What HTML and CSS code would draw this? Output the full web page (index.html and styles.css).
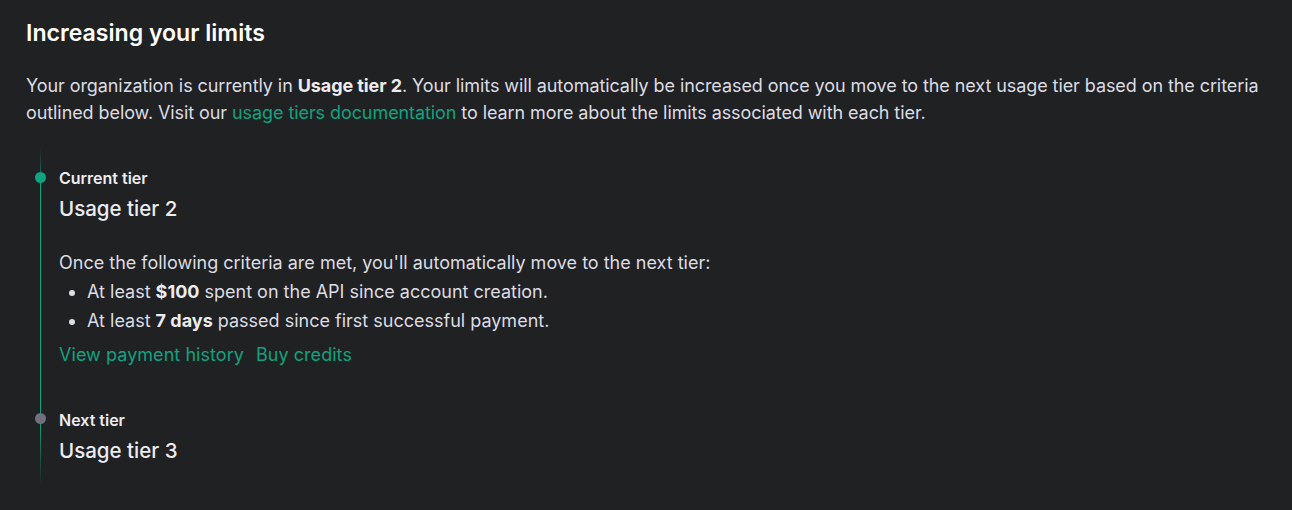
FILE: index.html
```html
<!DOCTYPE html>
<html lang="en">
<head>
<meta charset="utf-8">
<title>Increasing your limits</title>
<link rel="stylesheet" href="styles.css">
</head>
<body>
<section class="page">
  <h2 class="heading">Increasing your limits</h2>
  <p class="intro">Your organization is currently in <strong>Usage tier 2</strong>. Your limits will automatically be increased once you move to the next usage tier based on the criteria outlined below. Visit our <a class="link" href="#">usage tiers documentation</a> to learn more about the limits associated with each tier.</p>

  <div class="timeline">
    <div class="tier">
      <div class="marker">
        <span class="seg seg-top-fade"></span>
        <span class="dot dot-green"></span>
        <span class="seg seg-fill"></span>
      </div>
      <div class="tier-body tier-body-first">
        <div class="tier-label">Current tier</div>
        <div class="tier-title">Usage tier 2</div>
        <p class="criteria">Once the following criteria are met, you'll automatically move to the next tier:</p>
        <ul class="criteria-list">
          <li>At least <strong>$100</strong> spent on the API since account creation.</li>
          <li>At least <strong>7 days</strong> passed since first successful payment.</li>
        </ul>
        <div class="actions">
          <a class="link" href="#">View payment history</a>
          <a class="link" href="#">Buy credits</a>
        </div>
      </div>
    </div>
    <div class="tier">
      <div class="marker">
        <span class="seg seg-top"></span>
        <span class="dot dot-gray"></span>
        <span class="seg seg-bottom-fade"></span>
      </div>
      <div class="tier-body tier-body-last">
        <div class="tier-label">Next tier</div>
        <div class="tier-title">Usage tier 3</div>
      </div>
    </div>
  </div>
</section>
</body>
</html>
```

FILE: styles.css
```css
* { box-sizing: border-box; }
html, body {
  margin: 0;
  padding: 0;
  background: #202123;
}
body {
  font-family: Inter, "Noto Sans", "Liberation Sans", sans-serif;
  color: #ececf1;
  -webkit-font-smoothing: antialiased;
}
.page {
  padding: 19px 26px 0 26px;
}
.heading {
  margin: 0;
  font-size: 23.1px;
  line-height: 28px;
  font-weight: 600;
  color: #ffffff;
}
.intro {
  margin: 25px 0 0 0;
  font-size: 18px;
  line-height: 27px;
  letter-spacing: -0.08px;
  color: #dcdce4;
}
.intro strong, .criteria-list strong {
  font-weight: 700;
  color: #ececf1;
}
.link {
  color: #10a37f;
  text-decoration: none;
}
.timeline {
  margin-top: 21px;
  display: flex;
  flex-direction: column;
}
.tier {
  display: grid;
  grid-template-columns: 33px 1fr;
}
.marker {
  display: flex;
  flex-direction: column;
  align-items: center;
  width: 29px;
}
.seg {
  width: 1.5px;
  background: #10a37f;
}
.seg-top-fade {
  height: 25px;
  background: linear-gradient(to bottom, rgba(16,163,127,0), rgba(16,163,127,0.5));
}
.seg-top { height: 23px; }
.seg-fill { flex: 1; }
.seg-bottom-fade {
  flex: 1;
  background: linear-gradient(to bottom, #10a37f, rgba(16,163,127,0));
}
.dot {
  width: 11px;
  height: 11px;
  border-radius: 50%;
  flex: none;
}
.dot-green { background: #10a37f; }
.dot-gray { background: #707080; }
.tier-body-first {
  padding-top: 21px;
  padding-bottom: 21px;
}
.tier-body-last {
  padding-top: 20px;
  padding-bottom: 20px;
}
.tier-label {
  font-size: 16px;
  line-height: 20px;
  font-weight: 600;
  color: #ececf1;
}
.tier-title {
  margin-top: 7px;
  font-size: 20.5px;
  line-height: 28px;
  font-weight: 500;
  color: #ececf1;
}
.criteria {
  margin: 25px 0 0 0;
  font-size: 18px;
  line-height: 29px;
  color: #dcdce4;
}
.criteria-list {
  margin: 0;
  padding-left: 28px;
  font-size: 18px;
  line-height: 29px;
  color: #dcdce4;
}
.actions {
  margin-top: 6px;
  display: flex;
  gap: 12px;
  font-size: 18px;
  line-height: 28px;
}
.actions .link { letter-spacing: 0.05px; }
```
